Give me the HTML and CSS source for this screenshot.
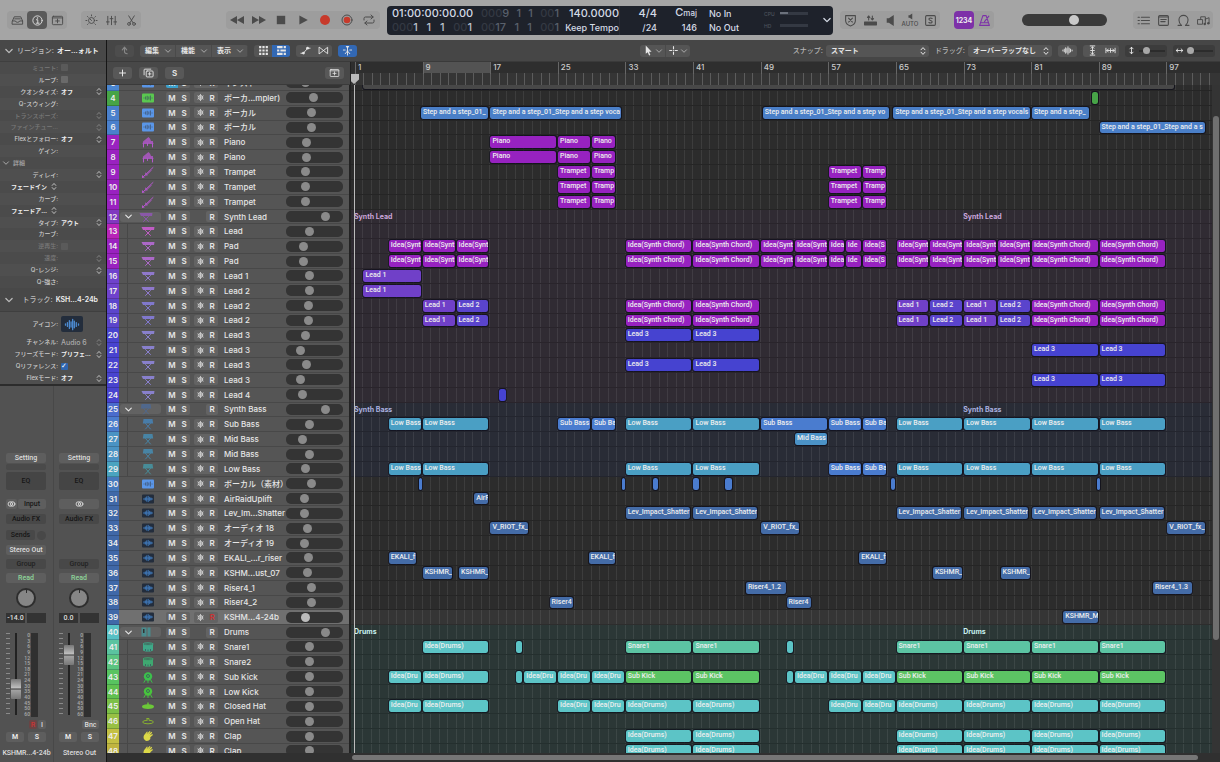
FILE: index.html
```html
<!DOCTYPE html>
<html lang="ja">
<head>
<meta charset="utf-8">
<title>Tracks</title>
<link rel="stylesheet" href="styles.css">
</head>
<body>
<svg class="defs" aria-hidden="true">
  <symbol id="i-down" viewBox="0 0 8 8"><path d="M1.5 2.8 4 5.3l2.5-2.5" class="ln"/></symbol>
  <symbol id="i-updown" viewBox="0 0 8 10"><path d="M2 3.8 4 1.6l2 2.2M2 6.2l2 2.2 2-2.2" class="ln"/></symbol>
  <symbol id="i-tray" viewBox="0 0 14 12"><path d="M1.5 6.5 3.5 2h7l2 4.5V10h-11zM1.5 6.5h3.2c.3 2 4.300 2 4.600 0h3.200M4 4.200h6" class="ln"/></symbol>
  <symbol id="i-info" viewBox="0 0 14 14"><circle cx="7" cy="7" r="5" class="ln"/><path d="M5.800 6.200H7.300V9.800M5.600 9.900h3.200" class="ln"/><circle cx="7" cy="4.200" r=".8" fill="currentColor"/></symbol>
  <symbol id="i-boxplus" viewBox="0 0 14 12"><rect x="1.500" y="1.500" width="11" height="9" rx="1" class="ln"/><path d="M1.500 3.200h11M7 4.500v4M5 6.500h4" class="ln"/></symbol>
  <symbol id="i-dial" viewBox="0 0 14 14"><circle cx="7" cy="7" r="3.200" class="ln"/><path d="M7 7 5.500 5.500M7 1v1M2.700 2.700l.7.7M11.300 2.700l-.7.7M1 7h1M12 7h1M2.700 11.300l.7-.7M11.300 11.300l-.7-.7" class="ln"/></symbol>
  <symbol id="i-mixer" viewBox="0 0 14 14"><path d="M3 2.500v9M7 2.500v9M11 2.500v9M1.500 8.500h3M5.500 5h3M9.500 8.500h3" class="ln"/></symbol>
  <symbol id="i-cut" viewBox="0 0 14 14"><path d="M4 2 8.700 9.500M10 2 5.300 9.500" class="ln"/><circle cx="4.300" cy="10.700" r="1.500" class="ln"/><circle cx="9.700" cy="10.700" r="1.500" class="ln"/></symbol>
  <symbol id="i-rew" viewBox="0 0 14 10"><path d="M7 1v8L0 5zM14 1v8L7 5z" fill="currentColor"/></symbol>
  <symbol id="i-fwd" viewBox="0 0 14 10"><path d="M0 1v8l7-4zM7 1v8l7-4z" fill="currentColor"/></symbol>
  <symbol id="i-stop" viewBox="0 0 10 10"><rect x="1.500" y="1.500" width="7" height="7" fill="currentColor"/></symbol>
  <symbol id="i-play" viewBox="0 0 10 10"><path d="M2 1.200v7.600L9 5z" fill="currentColor"/></symbol>
  <symbol id="i-rec" viewBox="0 0 12 12"><circle cx="6" cy="6" r="5" fill="#c73a2b"/></symbol>
  <symbol id="i-cap" viewBox="0 0 12 12"><circle cx="6" cy="6" r="5" class="ln"/><circle cx="6" cy="6" r="3.300" fill="#c73a2b"/></symbol>
  <symbol id="i-loop" viewBox="0 0 14 12"><path d="M2 6V4.500Q2 3 3.500 3H11M9 1l2.200 2L9 5M12 6v1.500Q12 9 10.500 9H3M5 7 2.800 9 5 11" class="ln"/></symbol>
  <symbol id="i-shield" viewBox="0 0 12 12"><path d="M1.500 1.500h9v5Q10 10 6 11 2 10 1.500 6.500zM4.200 3.800l3.600 3.600M7.800 3.800 4.200 7.400" class="ln"/></symbol>
  <symbol id="i-tray2" viewBox="0 0 12 12"><path d="M4.300 5.500V2M3.200 3.200 4.300 1.800l1.100 1.400M7.700 1.800v3.500M6.600 4.200l1.100 1.300 1.100-1.300" class="ln"/><rect x="0" y="7" width="12" height="3.500" rx=".5" fill="currentColor"/></symbol>
  <symbol id="i-spk" viewBox="0 0 10 12"><path d="M1.500 4h2L8 1v10L3.500 8h-2z" fill="currentColor"/></symbol>
  <symbol id="i-sbox" viewBox="0 0 12 12"><rect x="1.500" y="1.500" width="9" height="9" rx="1" class="ln"/><path d="M7.500 4.200Q6 3.200 4.700 4.200 4.300 5.600 6 6q2 .5 1.300 1.800Q6 8.800 4.500 7.800" class="ln"/></symbol>
  <symbol id="i-metro" viewBox="0 0 12 12"><path d="M4.500 1.500h3L10.500 10.500h-9zM2.500 8h7M6 7l4-5" class="ln"/></symbol>
  <symbol id="i-list" viewBox="0 0 12 10"><path d="M4 2h7.500M4 5h7.500M4 8h7.500M1 2h1.200M1 5h1.200M1 8h1.200" class="ln"/></symbol>
  <symbol id="i-note" viewBox="0 0 12 12"><rect x="1.500" y="1.500" width="9" height="9" rx="1" class="ln"/><path d="M1.500 2.800h9M3.500 5h5M3.500 7h4" class="ln"/></symbol>
  <symbol id="i-omega" viewBox="0 0 12 12"><path d="M1 10.500h3.200Q1.800 8.500 1.800 5.500a4.200 4.200 0 0 1 8.400 0Q10.200 8.500 7.800 10.500H11" class="ln"/></symbol>
  <symbol id="i-media" viewBox="0 0 14 12"><path d="M1 5h5v5H1zM4 5V2h5v4M9 4.500 13 3v6M9 4.500v5" class="ln"/><circle cx="8.300" cy="9.800" r="1.300" fill="currentColor"/><circle cx="12.200" cy="9" r="1.300" fill="currentColor"/></symbol>
  <symbol id="i-up" viewBox="0 0 10 10"><path d="M3 4.500 5 2l2 2.500M5 2v4q0 2 2.500 2" class="ln"/></symbol>
  <symbol id="i-grid" viewBox="0 0 10 10"><path d="M1 1h2v2H1zM4 1h2v2H4zM7 1h2v2H7zM1 4h2v2H1zM4 4h2v2H4zM7 4h2v2H7zM1 7h2v2H1zM4 7h2v2H4zM7 7h2v2H7z" fill="currentColor"/></symbol>
  <symbol id="i-bricks" viewBox="0 0 10 10"><path d="M1 1h5v2H1zM7 1h2v2H7zM1 4h2v2H1zM4 4h5v2H4zM1 7h5v2H1zM7 7h2v2H7z" fill="currentColor"/></symbol>
  <symbol id="i-auto" viewBox="0 0 12 10"><path d="M1 8h2.500L8.500 2.500H11" class="ln"/><circle cx="3.800" cy="7.800" r="1.500" fill="currentColor"/><circle cx="8.200" cy="2.500" r="1.500" fill="currentColor"/></symbol>
  <symbol id="i-flex" viewBox="0 0 12 10"><path d="M1.500 1.500 10.500 8.500v-7L1.500 8.500z" class="ln"/></symbol>
  <symbol id="i-catch" viewBox="0 0 12 12"><path d="M6 3.500v7.500M1.500 5.500h2M8.500 5.500h2M6 6.500 3.500 9.500M6 6.500l2.500 3" class="ln"/><path d="M4 1h4L6 4z" fill="currentColor"/></symbol>
  <symbol id="i-arrow" viewBox="0 0 8 10"><path d="M1.500.500v7.500l1.800-1.500 1.200 3 1.200-.5-1.200-2.900h2.300z" fill="currentColor"/></symbol>
  <symbol id="i-cross" viewBox="0 0 10 10"><path d="M5 1.500v2M5 6.500v2M1.500 5h2M6.500 5h2M5 5h.1" class="ln"/></symbol>
  <symbol id="i-wave" viewBox="0 0 12 10"><path d="M1 4.500v1M2.500 3.500v3M4 2v6M5.300 3v4M6.500 1v8M7.800 2.500v5M9.300 3.500v3M11 4.500v1" class="ln"/></symbol>
  <symbol id="i-vfit" viewBox="0 0 10 12"><path d="M2.500 1h5M2.500 11h5M5 2v3M5 7v3M3.500 3.500 5 2l1.500 1.500M3.500 8.500 5 10l1.500-1.500M3 6h4" class="ln"/></symbol>
  <symbol id="i-hfit" viewBox="0 0 12 10"><path d="M1 2.500v5M11 2.500v5M2 5h8M3.700 3.300 2 5l1.700 1.700M8.300 3.300 10 5 8.300 6.700M6 3v4" class="ln"/></symbol>
  <symbol id="i-va" viewBox="0 0 8 10"><path d="M4 1.500v7M2.200 3.200 4 1.300l1.800 1.900M2.200 6.800 4 8.700l1.800-1.900" class="ln"/></symbol>
  <symbol id="i-ha" viewBox="0 0 10 8"><path d="M1.500 4h7M3.200 2.200 1.300 4l1.900 1.800M6.800 2.200 8.700 4 6.800 5.800" class="ln"/></symbol>
  <symbol id="i-plus" viewBox="0 0 10 10"><path d="M5 2v6M2 5h6" class="ln"/></symbol>
  <symbol id="i-dup" viewBox="0 0 12 10"><rect x="3.500" y="2.800" width="7.500" height="6.500" rx="1" class="ln"/><path d="M1.200 7V1.700Q1.200.800 2 .800H8.500M7.200 4.500v3M5.700 6h3" class="ln"/></symbol>
  <symbol id="i-flake" viewBox="0 0 10 10"><path d="M5 1.500v7M2 3.300l6 3.400M8 3.300 2 6.700" class="ln"/><circle cx="5" cy="5" r="2.400" class="ln"/></symbol>
  <symbol id="i-rings" viewBox="0 0 10 8"><circle cx="3.700" cy="4" r="2.500" class="ln"/><circle cx="6.300" cy="4" r="2.500" class="ln"/></symbol>
  <symbol id="t-wave" viewBox="0 0 14 12"><rect x="1" y="1.500" width="12" height="9" rx="1" fill="currentColor"/><path d="M3 5.500v1M4.600 4.500v3M6.200 3.800v4.400M7.800 4.500v3M9.400 3.500v5M11 5.500v1" class="dk"/></symbol>
  <symbol id="t-audio" viewBox="0 0 14 12"><rect x="1" y="1.500" width="12" height="9" rx="1" fill="#232d3c"/><path d="M2.500 6h9M4.300 4.800v2.400M5.700 3.800v4.400M7.200 3.300v5.400M8.700 4.300v3.400M10 5v2" class="ln"/></symbol>
  <symbol id="t-piano" viewBox="0 0 14 12"><path d="M2 7V5.500Q4.500 3.500 7.500 1q2 1.500 2.500 4h2V7z" fill="currentColor" opacity=".8"/><path d="M2.500 7.500v3.500M6.500 7.500v2M11.500 7.500v3.500M2 7.300h10" class="ln"/></symbol>
  <symbol id="t-trp" viewBox="0 0 14 12"><path d="M2.500 10.500 12 1.500M4.500 10 10 4.500M4.300 7l1.800 1.800" class="ln"/><path d="M1 9 3.800 11.600 1 12z" fill="currentColor"/></symbol>
  <symbol id="t-keys" viewBox="0 0 14 12"><path d="M.5 2h13l-.5 3H2z" fill="currentColor"/><path d="M4.500 5.500 9.500 10.500M9.500 5.500l-5 5" class="ln"/></symbol>
  <symbol id="t-bass" viewBox="0 0 14 12"><path d="M2.500 1h9l.7 4.500H1.800z" fill="currentColor"/><path d="M4.500 5.500 9.500 11M9.500 5.500l-5 5.500" class="ln"/></symbol>
  <symbol id="t-machine" viewBox="0 0 14 12"><path d="M2.500 1.500h5v9h-5zM8.500 1.500h3v9h-3z" fill="currentColor" opacity=".7"/><path d="M4 3h1.500v4H4z" fill="#333"/></symbol>
  <symbol id="t-snare" viewBox="0 0 14 12"><path d="M2 3v6.500Q7 12 12 9.500V3Q7 5 2 3z" fill="currentColor"/><ellipse cx="7" cy="3" rx="5" ry="1.200" fill="#3f5f56"/><ellipse cx="7" cy="3" rx="5" ry="1.200" class="ln"/><path d="M4.500 8v2M7 8.500v2M9.500 8v2" class="dk"/></symbol>
  <symbol id="t-kick" viewBox="0 0 14 12"><circle cx="7" cy="5.500" r="4.200" fill="currentColor"/><circle cx="7" cy="5" r="1.500" class="dk"/><path d="M4.300 9 3 11.300M9.700 9 11 11.300M7 9.500v2" class="ln"/></symbol>
  <symbol id="t-hat" viewBox="0 0 14 12"><path d="M6.300 2.500h1.400v1.800Q12.500 4.800 13 6.300L12.800 7.300Q12 9 7 9T1.200 7.300L1 6.300Q1.500 4.800 6.300 4.300z" fill="currentColor"/></symbol>
  <symbol id="t-open" viewBox="0 0 14 12"><path d="M6 3.500h2v1.800Q12 5.500 12.500 7 12 8.800 7 8.800T1.500 7Q2 5.500 6 5.300z" class="ln"/></symbol>
  <symbol id="t-clap" viewBox="0 0 14 12"><path d="M3 5.200 6 1.500l.8.600L5.500 4.200 8.700 1l.8.700L7.200 4.500 10.500 1.800l.7.900-2.700 2.800 2.900-1.500.5.900-2.600 2.300V9Q7.500 11.500 4.700 10.800 2.300 9.800 2.500 7z" fill="currentColor"/></symbol>
</svg>

<header class="toolbar">
  <div class="bar-left">
    <div class="tgroup"><button aria-label="ライブラリ"><svg><use href="#i-tray"/></svg></button><button class="on" aria-label="インスペクタ"><svg><use href="#i-info"/></svg></button><button aria-label="ツールバー"><svg><use href="#i-boxplus"/></svg></button></div>
    <div class="tgroup"><button aria-label="Smart Control"><svg><use href="#i-dial"/></svg></button><button aria-label="ミキサー"><svg><use href="#i-mixer"/></svg></button><button aria-label="エディタ"><svg><use href="#i-cut"/></svg></button></div>
    <div class="tgroup transport"><button aria-label="巻き戻し"><svg><use href="#i-rew"/></svg></button><button aria-label="早送り"><svg><use href="#i-fwd"/></svg></button><button aria-label="停止"><svg><use href="#i-stop"/></svg></button><button aria-label="再生"><svg><use href="#i-play"/></svg></button><button aria-label="録音"><svg><use href="#i-rec"/></svg></button><button aria-label="キャプチャ"><svg><use href="#i-cap"/></svg></button><button aria-label="サイクル"><svg><use href="#i-loop"/></svg></button></div>
  </div>
  <div class="lcd">
    <div class="cell pos"><b>01:00:00:00.00</b><b class="beats"><span><i>000</i>1</span><span>1</span><span>1</span><span><i>00</i>1</span></b></div>
    <div class="cell loc"><b class="beats"><span><i>000</i>9</span><span>1</span><span>1</span><span><i>00</i>1</span></b><b class="beats"><span><i>00</i>17</span><span>1</span><span>1</span><span><i>00</i>1</span></b></div>
    <div class="cell end tempo"><b>140.0000</b><b class="sm">Keep Tempo</b></div>
    <div class="cell end sig"><b>4/4</b><b class="sm">/24</b></div>
    <div class="cell end key"><b>C<small>maj</small></b><b class="sm">146</b></div>
    <div class="cell io"><b class="sm">No In</b><b class="sm">No Out</b></div>
    <div class="cell load"><div><span>CPU</span><meter min="0" max="100" value="30" aria-label="CPU"></meter></div><div><span>HD</span><meter min="0" max="100" value="0" aria-label="HD"></meter></div></div>
    <button class="more" aria-label="表示モード"><svg><use href="#i-down"/></svg></button>
  </div>
  <div class="bar-right">
    <div class="tgroup"><button aria-label="置き換え"><svg><use href="#i-shield"/></svg></button><button aria-label="オートパンチ"><svg><use href="#i-tray2"/></svg></button><button aria-label="モニタ"><svg><use href="#i-spk"/></svg></button><button class="autob"><svg><use href="#i-spk"/></svg>AUTO</button><button aria-label="ソロ"><svg><use href="#i-sbox"/></svg></button></div>
    <div class="tgroup count"><button class="purple">1234</button><button class="mtr" aria-label="メトロノーム"><svg><use href="#i-metro"/></svg></button></div>
    <input class="master" type="range" value="62" aria-label="マスター音量">
    <div class="tgroup views"><button aria-label="リスト"><svg><use href="#i-list"/></svg></button><button aria-label="メモ"><svg><use href="#i-note"/></svg></button><button aria-label="ループ"><svg><use href="#i-omega"/></svg></button><button aria-label="ブラウザ"><svg><use href="#i-media"/></svg></button></div>
  </div>
</header>

<main class="workspace">
  <aside class="inspector">
    <h2><svg><use href="#i-down"/></svg><span>リージョン:</span><b>オー…ォルト</b></h2>
    <div class="params" id="params"></div>
    <h2 class="trk"><svg><use href="#i-down"/></svg><span>トラック:</span><b>KSH...4-24b</b></h2>
    <div class="tparams">
      <div class="param tall"><span class="lab">アイコン:</span><span class="pic"><svg><use href="#i-wave"/></svg></span></div>
      <div class="param"><span class="lab">チャンネル:</span><span class="val soft">Audio 6</span><svg class="ud off"><use href="#i-updown"/></svg></div>
      <div class="param"><span class="lab">フリーズモード:</span><span class="val">プリフェ…</span><svg class="ud"><use href="#i-updown"/></svg></div>
      <div class="param"><label class="lab" for="qref">Qリファレンス:</label><input id="qref" type="checkbox" checked></div>
      <div class="param"><span class="lab">Flexモード:</span><span class="val">オフ</span><svg class="ud"><use href="#i-updown"/></svg></div>
    </div>
    <div class="strips" id="strips"></div>
  </aside>

  <section class="arrange">
    <nav class="menubar">
      <div class="mb">
        <button class="chip dim" aria-label="上へ"><svg><use href="#i-up"/></svg></button>
        <div class="seg menus"><button>編集<svg><use href="#i-down"/></svg></button><button>機能<svg><use href="#i-down"/></svg></button><button>表示<svg><use href="#i-down"/></svg></button></div>
        <div class="seg pair"><button aria-label="グリッド"><svg><use href="#i-grid"/></svg></button><button class="blue" aria-label="トラック"><svg><use href="#i-bricks"/></svg></button></div>
        <div class="seg pair"><button aria-label="オートメーション"><svg><use href="#i-auto"/></svg></button><button aria-label="Flex"><svg><use href="#i-flex"/></svg></button></div>
        <button class="chip blue" aria-label="キャッチ"><svg><use href="#i-catch"/></svg></button>
      </div>
      <div class="seg tools"><button aria-label="ポインタツール"><svg><use href="#i-arrow"/></svg><svg class="c"><use href="#i-down"/></svg></button><button aria-label="マーキーツール"><svg><use href="#i-cross"/></svg><svg class="c"><use href="#i-down"/></svg></button></div>
      <div class="mb end">
        <label for="snap">スナップ:</label><span class="pick snap"><select id="snap"><option>スマート</option></select><svg><use href="#i-updown"/></svg></span>
        <label for="drag" class="gap">ドラッグ:</label><span class="pick drag"><select id="drag"><option>オーバーラップなし</option></select><svg><use href="#i-updown"/></svg></span>
        <button class="chip" aria-label="波形ズーム"><svg><use href="#i-wave"/></svg></button>
        <div class="seg pair"><button aria-label="縦に合わせる"><svg><use href="#i-vfit"/></svg></button><button aria-label="横に合わせる"><svg><use href="#i-hfit"/></svg></button></div>
        <div class="zoom"><svg><use href="#i-va"/></svg><input type="range" value="20" aria-label="縦ズーム"></div>
        <div class="zoom"><svg><use href="#i-ha"/></svg><input type="range" value="0" aria-label="横ズーム"></div>
      </div>
    </nav>
    <div class="board">
      <div class="headtools"><button aria-label="トラックを追加"><svg><use href="#i-plus"/></svg></button><button aria-label="トラックを複製"><svg><use href="#i-dup"/></svg></button><button>S</button><button class="last" aria-label="トラックヘッダ"><svg><use href="#i-boxplus"/></svg></button></div>
      <div class="ruler"><div class="scale" id="ruler"></div></div>
      <div class="heads"><div class="rows" id="heads"></div></div>
      <div class="canvas"><div class="rows" id="lanes"></div><div class="playline"></div><div class="vscroll"><div></div></div></div>
      <div class="foot"></div>
      <div class="hscroll"><div></div></div>
    </div>
  </section>
</main>
<script src="app.js"></script>
</body>
</html>
```
FILE: styles.css
```css
* { box-sizing: border-box; }
body { margin: 0; height: 100vh; display: flex; flex-direction: column; overflow: hidden; background: #323232; color: #e6e6e6; font: 500 8px/1 Inter, "Noto Sans CJK JP", sans-serif; }
button, input, select { font: inherit; color: inherit; margin: 0; padding: 0; border: 0; background: none; }
button { display: flex; align-items: center; justify-content: center; }
h2 { margin: 0; font: inherit; }
svg { width: 12px; height: 12px; flex: none; }
.defs { position: absolute; width: 0; height: 0; }
.ln { fill: none; stroke: currentColor; stroke-width: 1; stroke-linecap: round; stroke-linejoin: round; }
.dk { fill: none; stroke: #3a4a60; stroke-width: 1; opacity: .7; }
input[type=range] { appearance: none; }

.toolbar { flex: none; height: 40px; display: grid; grid-template-columns: 1fr auto 1fr; background: #a5a5a5; color: #4b4b4b; padding: 0 7px; align-items: center; }
.bar-left, .bar-right { display: flex; align-items: center; gap: 14px; }
.bar-left { margin-right: 7px; }
.bar-right { margin-left: 7px; }
.tgroup { display: flex; height: 18px; border-radius: 4px; background: #9d9d9d; }
.tgroup button { width: 20px; height: 18px; border-radius: 4px; }
.tgroup svg { width: 13px; height: 13px; }
.tgroup .on { background: #5a5a5a; color: #ddd; }
.transport { margin-left: auto; }
.tgroup.transport button { width: 22px; }
.transport svg { width: 14px; height: 12px; }
.tgroup .autob { flex-direction: column; font-size: 6px; gap: 1px; }
.tgroup .autob svg { width: 7px; height: 7px; }
.count .purple { background: #7d31a8; color: #eee; font-size: 7px; font-weight: 700; }
.count .mtr { color: #7d31a8; }
.master { width: 85px; height: 12px; border-radius: 6px; background: #3a3a3a; margin-left: 14px; }
.master::-webkit-slider-thumb { appearance: none; width: 10px; height: 10px; border-radius: 50%; background: #c9c9c9; }
.views { margin-left: auto; }

.lcd { width: 446px; height: 29px; border-radius: 4px; background: #1e222b; color: #d5dbe6; display: flex; padding: 0 2px 0 5px; }
.cell { display: flex; flex-direction: column; justify-content: center; gap: 3px; flex: none; }
.cell b { font-weight: 500; font-size: 11px; line-height: 11px; white-space: nowrap; }
.cell .sm { font-size: 9px; }
.cell small { font-size: 8px; }
.cell i { font-style: normal; color: #343943; }
.beats { display: flex; justify-content: space-between; color: #b9c0cc; }
.loc .beats { color: #59606b; }
.end { align-items: flex-end; }
.pos { width: 80px; }
.loc { width: 78px; margin-left: 9px; }
.tempo { width: 60px; }
.sig { width: 38px; border-left: 1px solid #292d36; }
.key { width: 40px; }
.io { width: 62px; padding-left: 12px; }
.load { width: 44px; margin-left: 5px; gap: 7px; color: #4c525d; font-size: 5px; }
.load div { display: flex; justify-content: space-between; align-items: center; }
.load meter { appearance: none; width: 28px; height: 2px; background: #343943; border: 0; }
.load meter::-webkit-meter-inner-element { appearance: none; display: block; height: 2px; }
.load meter::-webkit-meter-bar { height: 2px; background: #343943; border: 0; border-radius: 0; }
.load meter::-webkit-meter-optimum-value { background: #6b717c; border-radius: 0; }
.more { margin-left: auto; width: 8px; }
.more svg { width: 10px; height: 10px; }

.workspace { flex: 1; min-height: 0; display: grid; grid-template-columns: 107px 1fr; }
.inspector { display: flex; flex-direction: column; min-height: 0; background: #4f4f4f; border-right: 1px solid #161616; font-size: 6px; overflow: hidden; }
.inspector h2 { flex: none; height: 22px; display: flex; align-items: center; gap: 3px; padding: 0 8px 0 4px; background: #484848; font-size: 7px; color: #bdbdbd; white-space: nowrap; border-bottom: 1px solid #3f3f3f; }
.inspector h2 svg { width: 10px; height: 10px; margin-right: auto; }
.inspector h2 b { color: #f0f0f0; font-weight: 600; }
.inspector .trk { height: 24px; }
.params { flex: none; height: 226px; display: flex; flex-direction: column; }
.params .param { flex: 1; }
.param { display: grid; grid-template-columns: 58px 30px 10px; column-gap: 3px; align-items: center; min-height: 0; white-space: nowrap; color: #ccc; }
.param:nth-child(odd) { background: #4b4b4b; }
.lab { text-align: right; }
.val { color: #f0f0f0; font-weight: 600; }
.val.soft { color: #aaa; font-weight: 500; font-size: 7px; }
.param.off { color: #7a7a7a; }
.param.off .ud, .ud.off { color: #888; }
.ud { width: 8px; height: 9px; color: #ccc; }
.param .ud { margin-left: 1px; }
.param .fade { display: flex; align-items: center; justify-content: flex-end; gap: 2px; color: #f0f0f0; font-weight: 600; }
.param .sect { display: flex; align-items: center; gap: 3px; padding-left: 2px; color: #aaa; }
.param .sect svg { width: 8px; height: 8px; }
.param input { appearance: none; width: 7px; height: 7px; border-radius: 1px; background: #6a6a6a; }
.param.off input { background: #5a5a5a; }
.param input:checked { background: #2f66b0; }
.param input:checked::after { content: "✓"; display: block; font: 700 7px/7px "DejaVu Sans", sans-serif; color: #fff; }
.tparams { flex: none; border-bottom: 2px solid #2c2c2c; }
.tparams .param { height: 12px; background: none; }
.tparams .tall { height: 24px; }
.pic { width: 22px; height: 16px; border-radius: 2px; background: #232d3c; color: #4c8ad0; display: flex; justify-content: center; align-items: center; }
.pic svg { width: 18px; height: 13px; }

.strips { flex: 1; display: grid; grid-template-columns: 1fr 1fr; background: #525252; min-height: 0; font-family: Roboto, "Noto Sans CJK JP", sans-serif; font-size: 7px; }
.strip { display: flex; flex-direction: column; padding: 67px 6px 4px; color: #111; min-width: 0; }
.strip + .strip { border-left: 1px solid #484848; padding-left: 5px; }
.strip button, .strip .slot { flex: none; height: 10px; border-radius: 2px; background: #5e5e5e; text-align: center; line-height: 10px; color: #ddd; width: 40px; }
.strip .slot { background: #4a4a4a; }
.strip .thin { height: 6px; margin-top: 1px; }
.strip .eq { height: 18px; margin: 2px 0 9px; background: #454545; color: #161616; }
.strip .dark { background: #484848; color: #161616; }
.strip .split { display: grid; grid-template-columns: 11px 1fr; gap: 1px; margin-bottom: 5px; width: 40px; }
.strip .split button { width: auto; color: #161616; }
.strip .split svg, .strip .mono svg { width: 9px; height: 8px; color: #ddd; }
.strip .mono { margin-bottom: 5px; }
.strip .sends { display: flex; justify-content: space-between; align-items: center; height: 10px; margin: 6px 0 5px; width: 40px; }
.strip .sends button { width: 29px; }
.strip .sends i { width: 9px; height: 9px; border-radius: 50%; background: #484848; }
.strip .empty { height: 31px; flex: none; }
.strip .dark.group { margin: 4px 0; color: #222; }
.strip .read { color: #8ed69a; }
.knob { flex: none; width: 20px; height: 20px; margin: 5px 10px; border-radius: 50%; border: 2px solid #2e2e2e; background: linear-gradient(#2e2e2e 0 3px, transparent 3px) center top / 1px 100% no-repeat #868686; }
.vals { flex: none; width: 40px; display: grid; grid-template-columns: 1fr 1fr; gap: 2px; color: #ddd; }
.vals span { background: #333; height: 10px; line-height: 10px; text-align: center; }
.fade-box { flex: none; height: 84px; display: grid; grid-template-columns: 4px 10px 8px 7px; column-gap: 1px; margin: 10px 0 3px; }
.ticks { background: repeating-linear-gradient(#8a8a8a 0 1px, transparent 1px 5px); }
.fade-box input { writing-mode: vertical-lr; direction: rtl; width: 10px; height: 82px; background: linear-gradient(90deg, transparent 4px, #222 4px 6px, transparent 6px); }
.fade-box input::-webkit-slider-thumb { appearance: none; width: 10px; height: 20px; border-radius: 1px; background: linear-gradient(#777, #c4c4c4 47%, #333 48% 52%, #a5a5a5 53%, #777); }
.nums { display: flex; flex-direction: column; justify-content: space-between; font-size: 5px; color: #aaa; text-align: right; }
.mtr2 { background: #303030; }
.strip .ri { display: flex; justify-content: flex-end; gap: 1px; margin-bottom: 3px; height: 9px; width: 40px; }
.strip .ri button { width: 8px; height: 9px; }
.strip .ri .rd { color: #c33; background: #6a4444; }
.strip .ri .bnc { width: 17px; }
.strip .ms { display: flex; justify-content: space-between; height: 10px; width: 40px; }
.strip .ms button { width: 18px; font-weight: 600; color: #eee; }
.strip .nm { margin-top: auto; color: #ddd; display: flex; justify-content: center; white-space: nowrap; padding-bottom: 1px; }

.arrange { display: flex; flex-direction: column; min-width: 0; min-height: 0; }
.menubar { flex: none; height: 22px; display: grid; grid-template-columns: 1fr auto 1fr; align-items: center; background: #464646; padding: 0 5px 0 8px; font-size: 7px; border-bottom: 1px solid #3a3a3a; }
.mb { display: flex; align-items: center; gap: 6px; }
.mb.end { justify-content: flex-end; }
.chip, .seg, .zoom { height: 12px; border-radius: 3px; background: #555; }
.chip { width: 19px; }
.chip.dim { color: #888; background: #4d4d4d; }
.seg { display: flex; overflow: hidden; }
.menus button { width: 36px; justify-content: space-between; padding: 0 3px 0 5px; font-weight: 600; border-right: 1px solid #4a4a4a; }
.menus svg, .seg .c { width: 8px; height: 8px; color: #aaa; }
.pair button { width: 18px; }
.seg svg, .chip svg { width: 11px; height: 11px; }
.seg .c, .menus button svg { width: 8px; height: 8px; }
.chip.blue, .pair .blue { background: #3268b4; }
.tools button { width: 25px; gap: 1px; }
.tools button + button { border-left: 1px solid #4a4a4a; }
.mb label { color: #b5b5b5; margin-right: -3px; }
.pick { position: relative; height: 12px; border-radius: 3px; background: #555; }
.pick select { appearance: none; width: 100%; height: 12px; padding: 0 5px; font-size: 7px; font-weight: 600; line-height: 12px; display: block; }
.pick svg { position: absolute; right: 2px; top: 1px; width: 8px; height: 10px; }
.snap { width: 103px; }
.drag { width: 84px; }
.zoom { display: flex; align-items: center; width: 42px; gap: 3px; padding: 0 2px; background: #3c3c3c; }
.zoom svg { width: 9px; height: 9px; }
.zoom input { width: 26px; height: 2px; background: #2c2c2c; }
.zoom input::-webkit-slider-thumb { appearance: none; width: 7px; height: 7px; border-radius: 50%; background: #a8a8a8; }

.board { flex: 1; min-height: 0; display: grid; grid-template-columns: 243px 1fr; grid-template-rows: 23px 1fr 9px; }
.headtools { display: flex; align-items: center; gap: 7px; padding: 0 6px; background: #484848; border-bottom: 1px solid #3a3a3a; }
.headtools button { width: 19px; height: 12px; border-radius: 3px; background: #585858; font-weight: 600; }
.headtools svg { width: 11px; height: 10px; }
.headtools .last { margin-left: auto; }
.ruler { background: linear-gradient(#2e2e2e 11px, #353535 11px); padding: 0 8px 0 4px; overflow: hidden; font-size: 8px; color: #ccc; border-left: 1px solid #222; }
.scale { position: relative; height: 100%; --bar: calc(100% / 101.4); background: repeating-linear-gradient(90deg, #5c5c5c 0 1px, transparent 1px var(--bar)) left bottom / 100% 12px no-repeat; }
.mark { position: absolute; top: 0; height: 12px; padding: 1px 0 0 2px; border-left: 1px solid #666; }
.cycle { position: absolute; top: 0; height: 11px; background: #535353; }
.head-pin { position: absolute; left: -6px; top: 12px; width: 10px; height: 10px; background: #b9b9b9; clip-path: polygon(0 0, 100% 0, 100% 55%, 50% 100%, 0 55%); }
.heads, .canvas { overflow: hidden; display: flex; min-height: 0; position: relative; }
.heads { background: #555; border-right: 1px solid #222; }
.rows { flex: 1; min-width: 0; margin: -9px 0 -6px; display: flex; flex-direction: column; }
.row { flex: 1; min-height: 0; display: grid; grid-template-columns: 12px 47px 24px 4px 24px 6px 62px 57px; align-items: stretch; }
.row > * { min-width: 0; }
.num { display: flex; align-items: center; justify-content: center; font-weight: 600; color: #eee; border-bottom: 1px solid rgba(0, 0, 0, .2); }
.row .body { grid-column: 2 / -1; display: grid; grid-template-columns: subgrid; align-items: center; border-bottom: 1px solid #484848; margin-right: -6px; }
.row.sel .body { background: #707070; }
.ico { display: flex; align-items: center; justify-content: center; height: 100%; margin-left: 8px; padding-left: 2px; }
.ico svg { width: 14px; height: 12px; }
.child .ico { border-left: 1px solid #474747; }
.folder .ico { background: #626262; border-radius: 3px; height: 10px; margin: 0 5px 0 1px; justify-content: flex-start; padding-left: 4px; gap: 6px; }
.folder .ico svg:first-child { width: 9px; height: 9px; }
.pill { display: flex; height: 11px; border-radius: 2px; background: #636363; overflow: hidden; font-weight: 600; }
.pill button { flex: 1; }
.pill svg { width: 9px; height: 9px; color: #ccc; }
.pill.solo { margin-left: 12px; }
.pill .m { background: #3aa0cc; }
.sel .arm { color: #c33; }
.name { white-space: nowrap; grid-column: 6; }
.body > .ico { grid-column: 1; }
.body > .p1 { grid-column: 2; }
.body > .p2 { grid-column: 4; }
.vol { grid-column: 7; width: 57px; height: 11px; border-radius: 5px; background: #343434; }
.vol::-webkit-slider-thumb { appearance: none; width: 9px; height: 9px; border-radius: 50%; background: #8a8a8a; }
.sel .vol::-webkit-slider-thumb { background: #bbb; }

.canvas { background: #2c2c2c; border-left: 1px solid #222; }
.lane { flex: 1; min-height: 0; padding: 0 0 0 3px; border-bottom: 1px solid rgba(0, 0, 0, .14); }
.lane.t12 { background-color: #302b33; }
.lane.t25 { background-color: #292c36; }
.lane.t39 { background-color: #353535; }
.lane.t40 { background-color: #2b3736; }
.track { position: relative; height: 100%; --bar: calc(100% / 101.4); background: repeating-linear-gradient(90deg, rgba(255, 255, 255, .08) 0 1px, transparent 1px var(--bar)); }
.region { position: absolute; top: 0; bottom: 0; border-radius: 3px; border: 1px solid rgba(5, 5, 20, .6); padding: 1px 0 0 2px; font: 500 7px/8px Roboto, sans-serif; color: #eee; white-space: nowrap; overflow: hidden; background-clip: padding-box; }
.glabel { position: absolute; top: 3px; font: 700 7px/8px Inter, sans-serif; }
.t12 .glabel { color: #cba6dc; }
.t25 .glabel { color: #a9b2e0; }
.t40 .glabel { color: #c8f0f0; }
.playline { position: absolute; left: 3px; top: 0; bottom: 0; width: 1px; background: #bbb; }
.vscroll { flex: none; width: 8px; background: #343434; padding: 31px 1px 113px; display: flex; }
.vscroll div { flex: 1; border-radius: 3px; background: #6f6f6f; }
.foot, .hscroll { background: #303030; }
.hscroll { padding: 2px 22px 2px 2px; }
.hscroll div { height: 5px; border-radius: 3px; background: #767676; }

.c-blue { background-color: #4a7fc8; }
.c-green { background-color: #47a447; }
.c-pur { background-color: #9722c0; }
.c-vio { background-color: #7040c8; }
.c-ind { background-color: #5a44cc; }
.c-lead { background-color: #4643d0; }
.c-low { background-color: #4a9fc4; }
.c-sub { background-color: #4a7ccf; }
.c-mid { background-color: #4b92c6; }
.c-aud { background-color: #446ca8; }
.c-teal { background-color: #5cc4c6; }
.c-snr { background-color: #5cc4a3; }
.c-kick { background-color: #5cc464; }
.c-mute { background-color: #484848; }
```
FILE: app.js
```js
const svg = (id, cls = '') => `<svg class="${cls}"><use href="#${id}"/></svg>`;

// Inspector parameters: [label, value, has stepper, disabled, kind]
const params = [
  ['ミュート:', '', 0, 1, 'check'], ['ループ:', '', 0, 0, 'check'], ['クオンタイズ:', 'オフ', 1], ['Q-スウィング:'],
  ['トランスポーズ:', '', 1, 1], ['ファインチュー…', '', 1, 1], ['Flexとフォロー:', 'オフ', 1], ['ゲイン:'],
  ['詳細', '', 0, 0, 'sect'], ['ディレイ:', '', 1], ['フェードイン', '', 0, 0, 'fade'], ['カーブ:'],
  ['フェードア…', '', 0, 0, 'fade'], ['タイプ:', 'アウト', 1], ['カーブ:'], ['逆再生:', '', 0, 1, 'check'],
  ['速度:', '', 1, 1], ['Q-レンジ:', '', 1], ['Q-強さ:']
];
document.getElementById('params').innerHTML = params.map(([l, v = '', st, off, kind], i) => {
  let inner;
  if (kind === 'sect') inner = `<span class="sect">${svg('i-down')}${l}</span>`;
  else if (kind === 'fade') inner = `<span class="fade">${l}${svg('i-updown', 'ud')}</span>`;
  else if (kind === 'check') inner = `<label class="lab" for="p${i}">${l}</label><input type="checkbox" id="p${i}">`;
  else inner = `<span class="lab">${l}</span><span class="val">${v}</span>${st ? svg('i-updown', 'ud') : ''}`;
  return `<div class="param ${off ? 'off' : ''}">${inner}</div>`;
}).join('');

// Channel strips
const marks = [0, 3, 6, 9, 12, 15, 18, 21, 24, 30, 35, 40, 45, 50, 60];
const strip = (name, db, fader, main) => `<div class="strip">
  <button>Setting</button><div class="slot thin"></div><button class="eq">EQ</button>
  ${main ? `<div class="split"><button aria-label="ステレオ">${svg('i-rings')}</button><button>Input</button></div>` : `<button class="mono" aria-label="ステレオ">${svg('i-rings')}</button>`}
  <button class="dark">Audio FX</button>
  ${main ? '<div class="sends"><button class="dark">Sends</button><i></i></div><button>Stereo Out</button>' : '<div class="empty"></div>'}
  <button class="dark group">Group</button><button class="read">Read</button>
  <div class="knob"></div>
  <div class="vals"><span>${db}</span><span></span></div>
  <div class="fade-box"><div class="ticks"></div><input type="range" value="${fader}" aria-label="${name} 音量"><div class="nums">${marks.map(m => `<span>${m}</span>`).join('')}</div><div class="mtr2"></div></div>
  <div class="ri">${main ? '<button class="rd">R</button><button>I</button>' : '<button class="bnc">Bnc</button>'}</div>
  <div class="ms"><button>M</button><button>S</button></div>
  <div class="nm">${name}</div></div>`;
document.getElementById('strips').innerHTML = strip('KSHMR...4-24b', '-14.0', 26, true) + strip('Stereo Out', '0.0', 81, false);

// Tracks: [number, name, colour, icon, icon colour, volume, kind]
const P = '#9a22c0', V = '#6f42cc', L = '#4843cf', A = '#4068a8', W = '#3f78b8';
const tracks = [
  [3, 'インスト', '#4a86d0', 't-wave', '#5a96e8', 31], [4, 'ボーカ...mpler)', '#47a447', 't-wave', '#5ac850', 47],
  [5, 'ボーカル', '#4a80cc', 't-wave', '#5a96e8', 44], [6, 'ボーカル', '#4a80cc', 't-wave', '#5a96e8', 44],
  [7, 'Piano', P, 't-piano', '#b458cc', 33], [8, 'Piano', P, 't-piano', '#b458cc', 33],
  [9, 'Trampet', P, 't-trp', '#b458cc', 31], [10, 'Trampet', P, 't-trp', '#b458cc', 31], [11, 'Trampet', P, 't-trp', '#b458cc', 31],
  [12, 'Synth Lead', '#8038c0', 't-keys', '#8a58a8', 73, 'folder'],
  [13, 'Lead', '#b824b8', 't-keys', '#c05cc4', 40, 'child'], [14, 'Pad', P, 't-keys', '#ac68c8', 28, 'child'], [15, 'Pad', P, 't-keys', '#ac68c8', 28, 'child'],
  [16, 'Lead 1', V, 't-keys', '#8f78cc', 40, 'child'], [17, 'Lead 2', V, 't-keys', '#8f78cc', 40, 'child'],
  [18, 'Lead 2', '#5b45cc', 't-keys', '#8078cc', 38, 'child'], [19, 'Lead 2', '#5b45cc', 't-keys', '#8078cc', 38, 'child'],
  [20, 'Lead 3', L, 't-keys', '#8880cc', 32, 'child'], [21, 'Lead 3', L, 't-keys', '#8880cc', 21, 'child'], [22, 'Lead 3', L, 't-keys', '#8880cc', 33, 'child'],
  [23, 'Lead 3', L, 't-keys', '#8880cc', 21, 'child'], [24, 'Lead 4', L, 't-keys', '#8880cc', 25, 'child'],
  [25, 'Synth Bass', '#4a6ccc', 't-bass', '#50688c', 73, 'folder'],
  [26, 'Sub Bass', '#4a7ccd', 't-bass', '#487ca8', 40, 'child'], [27, 'Mid Bass', '#4a93c4', 't-bass', '#4884a4', 25, 'child'],
  [28, 'Mid Bass', '#4a93c4', 't-bass', '#4884a4', 40, 'child'], [29, 'Low Bass', '#4aa4c0', 't-bass', '#488c98', 31, 'child'],
  [30, 'ボーカル（素材）', '#4678bc', 't-wave', '#5a96e8', 44], [31, 'AirRaidUplift', A, 't-audio', W, 30], [32, 'Lev_Im...Shatter', A, 't-audio', W, 30],
  [33, 'オーディオ 18', A, 't-audio', W, 36], [34, 'オーディオ 19', A, 't-audio', W, 30], [35, 'EKALI_...r_riser', A, 't-audio', W, 38],
  [36, 'KSHM...ust_07', A, 't-audio', W, 36], [37, 'Riser4_1', A, 't-audio', W, 44], [38, 'Riser4_2', A, 't-audio', W, 44],
  [39, 'KSHM...4-24b', A, 't-audio', W, 31, 'sel'], [40, 'Drums', '#56c0c4', 't-machine', '#3f9ca0', 73, 'folder'],
  [41, 'Snare1', '#5bc4a0', 't-snare', '#3fa888', 40, 'child'], [42, 'Snare2', '#5bc480', 't-snare', '#3fa870', 40, 'child'],
  [43, 'Sub Kick', '#58c460', 't-kick', '#3cc04c', 40, 'child'], [44, 'Low Kick', '#60c050', 't-kick', '#48c43c', 40, 'child'],
  [45, 'Closed Hat', '#7cc048', 't-hat', '#6cc838', 40, 'child'], [46, 'Open Hat', '#98c044', 't-open', '#88b030', 40, 'child'],
  [47, 'Clap', '#c4c044', 't-clap', '#dcd848', 40, 'child'], [48, 'Clap', '#c0b440', 't-clap', '#dcd848', 40, 'child']
];
document.getElementById('heads').innerHTML = tracks.map(([n, name, col, ico, icol, vol, kind = '']) => {
  const folder = kind === 'folder';
  return `<div class="row ${kind}"><div class="num" style="background:${col}">${n}</div><div class="body">
    <div class="ico">${folder ? svg('i-down') : ''}<svg style="color:${icol}"><use href="#${ico}"/></svg></div>
    <div class="pill p1"><button class="${n === 3 ? 'm' : ''}">M</button><button>S</button></div>
    <div class="pill p2 ${folder ? 'solo' : ''}">${folder ? '' : `<button aria-label="フリーズ">${svg('i-flake')}</button>`}<button class="arm">R</button></div>
    <span class="name">${name}</span><input class="vol" type="range" value="${vol}" aria-label="${name} 音量"></div></div>`;
}).join('');

// Regions: [start bar, end bar, text, colour]
const seq = (pts, text, c) => pts.map(([a, b]) => [a, b, text, c]);
const late = [[65, 73], [73, 81], [81, 89], [89, 97]], mid = [[33, 41], [41, 49]];
const S = 'Step and a step_01_', SS = S + 'Step and a step vocals';
const trampet = [...seq([[25, 29], [57, 61]], 'Trampet', 'pur'), ...seq([[29, 32], [61, 64]], 'Tramp', 'pur')];
const piano = seq([[17, 25], [25, 29], [29, 32]], 'Piano', 'pur');
const chord = [...seq([...mid, [81, 89], [89, 97]], 'Idea(Synth Chord)', 'pur'),
  ...seq([[5, 9], [9, 13], [13, 17], [49, 53], [53, 57], [65, 69], [69, 73], [73, 77], [77, 81]], 'Idea(Synt', 'pur'),
  [57, 59, 'Idea', 'pur'], [59, 61, 'Ide', 'pur'], [61, 64, 'Idea(S', 'pur']];
const leads = [...seq([[9, 13], [65, 69], [73, 77]], 'Lead 1', 'vio'), ...seq([[13, 17], [69, 73], [77, 81]], 'Lead 2', 'ind'),
  ...seq([...mid, [81, 89], [89, 97]], 'Idea(Synth Chord)', 'pur')];
const lead3a = seq(mid, 'Lead 3', 'lead'), lead3b = seq([[81, 89], [89, 97]], 'Lead 3', 'lead');
const low = seq([[5, 9], [9, 17], ...mid, ...late], 'Low Bass', 'low');
const subs = [[57, 61, 'Sub Bass', 'sub'], [61, 64, 'Sub Ba', 'sub']];
const claps = seq([...mid, ...late], 'Idea(Drums)', 'teal');
const regions = {
  3: [[2, 98, '', 'mute']],
  4: [[88.1, 89, '', 'green']],
  5: [[8.8, 17, S, 'blue'], [17, 32.7, S + 'Step and a step voca', 'blue'], [49.2, 64.3, S + 'Step and a step vo', 'blue'], [64.6, 81, SS, 'blue'], [81, 88, 'Step and a step_', 'blue']],
  6: [[89, 101.7, S + 'Step and a s', 'blue']],
  7: piano, 8: piano, 9: trampet, 10: trampet, 11: trampet, 14: chord, 15: chord,
  16: [[2, 9, 'Lead 1', 'vio']], 17: [[2, 9, 'Lead 1', 'vio']], 18: leads, 19: leads,
  20: lead3a, 21: lead3b, 22: lead3a, 23: lead3b, 24: [[18, 19.1, '', 'lead']],
  26: [...low, [25, 29, 'Sub Bass', 'sub'], [29, 32, 'Sub Ba', 'sub'], [49, 57, 'Sub Bass', 'sub'], ...subs],
  27: [[53, 57, 'Mid Bass', 'mid']], 29: [...low, ...subs],
  30: seq([[8.6, 9.2], [32.6, 33.2], [36.2, 37.1], [40.9, 41.9], [44.7, 45.8], [64.4, 65], [88.7, 89.3]], '', 'sub'),
  31: [[15.1, 17, 'AirR', 'aud']],
  32: seq([33, 41, 65, 73, 81, 89].map(b => [b, b + 7.8]), 'Lev_Impact_Shatter', 'aud'),
  33: seq([17, 49, 97].map(b => [b, b + 4.7]), 'V_RIOT_fx_', 'aud'),
  35: seq([[5, 8.5], [28.6, 32], [60.6, 64]], 'EKALI_f', 'aud'),
  36: seq([[9, 12.7], [13.3, 17], [69.3, 73], [77.3, 81]], 'KSHMR_', 'aud'),
  37: [[47.2, 52.2, 'Riser4_1.2', 'aud'], [95.3, 100.2, 'Riser4_1.3', 'aud']],
  38: seq([[24, 27], [52, 55.1]], 'Riser4', 'aud'),
  39: [[84.7, 89, 'KSHMR_M', 'aud']],
  41: [[9, 17, 'Idea(Drums)', 'teal'], [20, 21, '', 'teal'], [52, 53, '', 'teal'], ...seq([...mid, ...late], 'Snare1', 'snr')],
  43: [[5, 9, 'Idea(Dru', 'teal'], [9, 17, 'Idea(Drums)', 'teal'], [20, 21, '', 'teal'], [52, 53, '', 'teal'],
    ...seq([[21, 25], [25, 29], [29, 33], [53, 57], [57, 61], [61, 65]], 'Idea(Dru', 'teal'), ...seq([...mid, ...late], 'Sub Kick', 'kick')],
  45: [[9, 17, 'Idea(Drums)', 'teal'], ...seq([[5, 9], [25, 29], [29, 33], [57, 61], [61, 65]], 'Idea(Dru', 'teal'), ...claps],
  47: claps, 48: claps
};
const BARS = 101.4;
const at = bar => ((bar - 1) / BARS * 100).toFixed(3);
const span = (a, b) => `left:${at(a)}%;width:${((b - a) / BARS * 100).toFixed(3)}%`;
const tint = n => n >= 40 ? 't40' : n === 39 ? 't39' : n >= 30 ? '' : n >= 25 ? 't25' : n >= 12 ? 't12' : '';
document.getElementById('lanes').innerHTML = tracks.map(([n, name, , , , , kind]) => {
  const items = (regions[n] || []).map(([a, b, t, c]) => `<div class="region c-${c}" style="${span(a, b)}">${t}</div>`).join('');
  const labels = kind === 'folder' ? [1, 73].map(b => `<span class="glabel" style="left:${at(b)}%">${name}</span>`).join('') : '';
  return `<div class="lane ${tint(n)}"><div class="track">${items}${labels}</div></div>`;
}).join('');

const bars = [];
for (let b = 1; b <= 97; b += 8) bars.push(`<span class="mark" style="left:${at(b)}%">${b}</span>`);
document.getElementById('ruler').innerHTML = `<div class="cycle" style="${span(9, 17)}"></div>${bars.join('')}<div class="head-pin"></div>`;
```
